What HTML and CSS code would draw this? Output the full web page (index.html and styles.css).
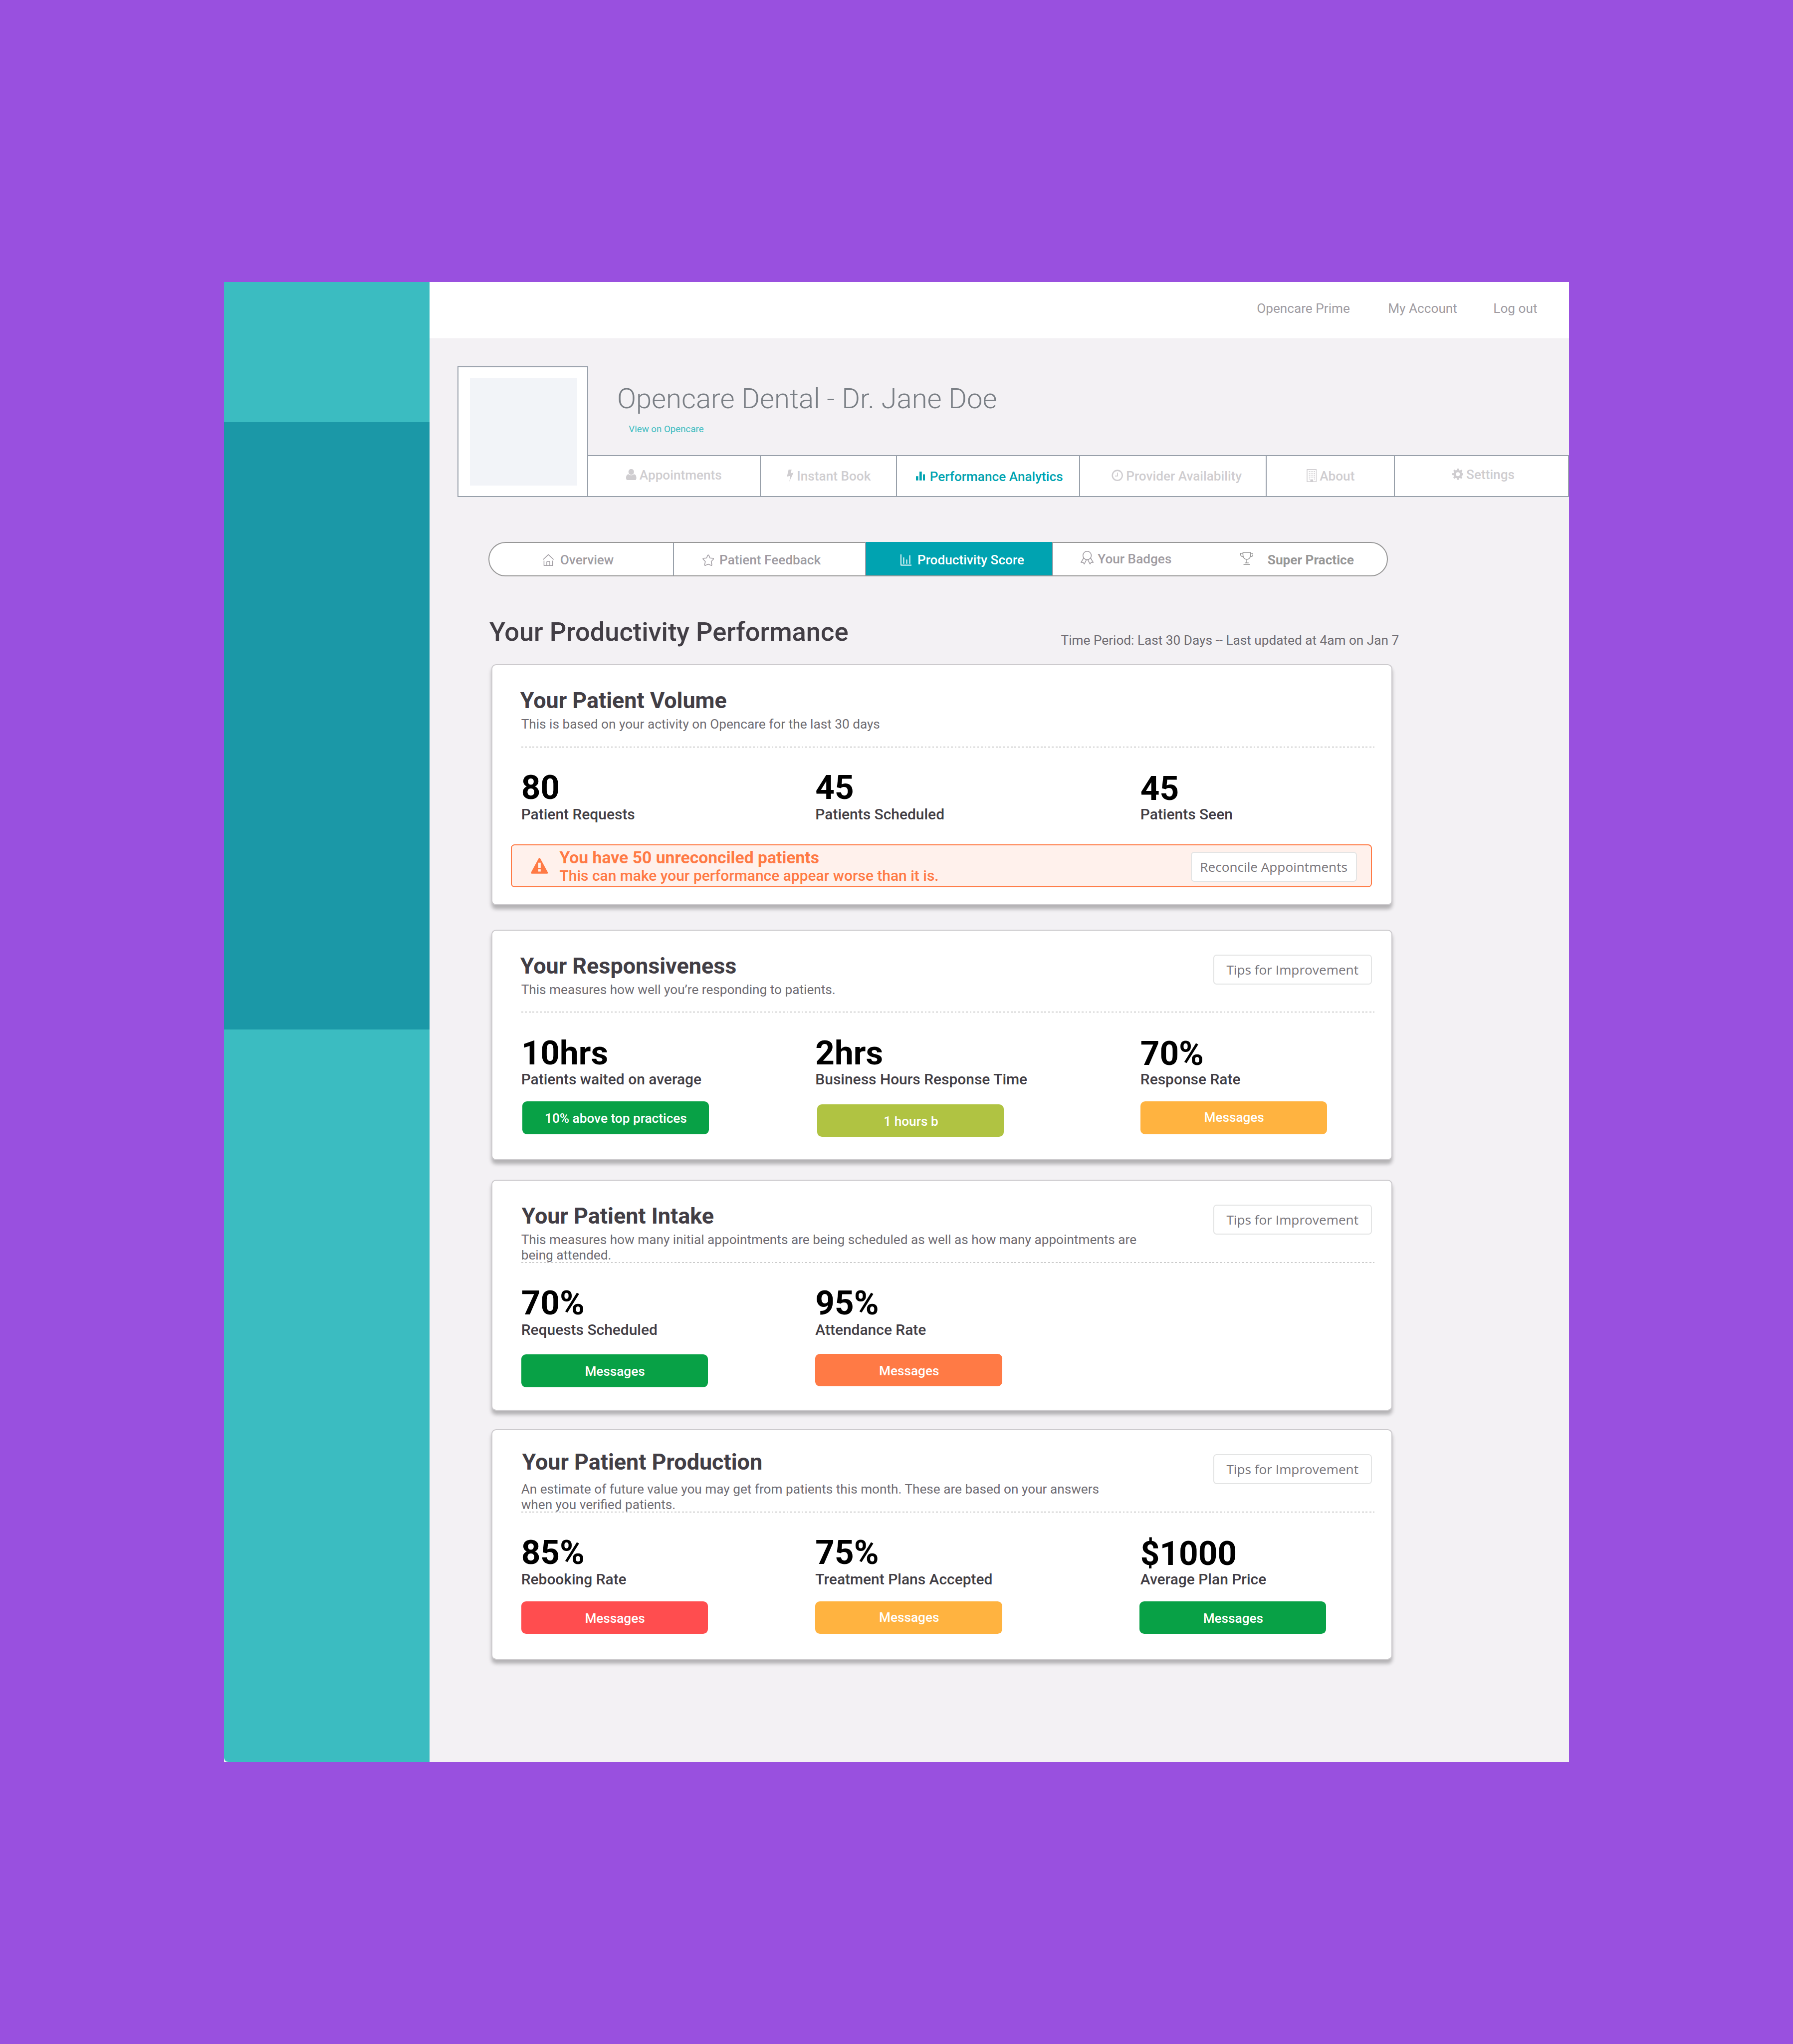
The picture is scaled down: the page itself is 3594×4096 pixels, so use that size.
FILE: index.html
```html
<!DOCTYPE html>
<html lang="en">
<head>
<meta charset="utf-8">
<title>Opencare Dental – Productivity Score</title>
<link rel="stylesheet" href="styles.css">
</head>
<body>
<div class="app">
  <aside class="sidebar"><div class="sidebar-panel"></div></aside>
  <div class="page">
    <header class="topbar">
      <a class="link-prime">Opencare Prime</a>
      <a class="link-account">My Account</a>
      <a class="link-logout">Log out</a>
    </header>

    <section class="profile">
      <div class="avatar"></div>
      <div class="profile-body">
        <h1>Opencare Dental - Dr. Jane Doe</h1>
        <a class="view-link">View on Opencare</a>
        <nav class="tabs">
          <a class="tab tab-appointments"><svg width="22" height="24" viewBox="0 0 22 24"><ellipse cx="11" cy="6" rx="6" ry="6.2"/><path d="M0 19c0-5 2-8 5.500-8 1.500 1.800 3.500 2.300 5.500 2.300s4-.5 5.500-2.300C20 11 22 14 22 19c0 3-1.200 5-3.500 5h-15C1.200 24 0 22 0 19z"/></svg><span>Appointments</span></a>
          <a class="tab tab-instant"><svg width="15" height="26" viewBox="0 0 15 26"><path d="M4 0h6.500L8.300 8l6.200-1.300L5.500 26 7.600 13.500.5 15z"/></svg><span>Instant Book</span></a>
          <a class="tab tab-performance"><svg width="20" height="19" viewBox="0 0 20 19"><path d="M0 10h5v9H0zM7.500 0h5v19h-5zM15 6h5v13h-5z"/></svg><span>Performance Analytics</span></a>
          <a class="tab tab-provider"><svg class="line" width="25" height="25" viewBox="0 0 25 25"><circle cx="12.500" cy="12.500" r="10.700" stroke-width="2.800"/><path d="M12.800 6.500v7.300H7.500" stroke-width="1.900"/></svg><span>Provider Availability</span></a>
          <a class="tab tab-about"><svg class="line" width="22" height="28" viewBox="0 0 22 28"><path d="M1 1h20v26H1z" stroke-width="1.800"/><path d="M8 22h6v5H8z" fill="currentColor" stroke="none"/><path d="M5 5.200h13M5 9.200h13M5 13.200h13M5 17.200h13M5 21.200h2M16 21.200h2" stroke-width="2" stroke-dasharray="2 1.660"/></svg><span>About</span></a>
          <a class="tab tab-settings"><svg width="24" height="24" viewBox="0 0 24 24"><path fill-rule="evenodd" d="M10 0h4l.6 3.400 1.900.8L19.400 2.200l2.500 2.600-2 2.900.8 1.900 3.300.5v3.900l-3.400.6-.8 1.900 2 2.900-2.600 2.600-2.900-2-1.800.8L14 24h-4l-.6-3.500-1.800-.8-2.900 2-2.600-2.600 2-2.900-.8-1.900L0 13.900V10l3.400-.5.8-1.900-2-2.900 2.500-2.600 2.900 2 1.900-.8zM12 7.800a4.200 4.200 0 1 0 0 8.400 4.200 4.200 0 0 0 0-8.400z"/></svg><span>Settings</span></a>
        </nav>
      </div>
    </section>

    <nav class="subnav">
      <a class="seg seg-overview"><svg class="line" width="24" height="26" viewBox="0 0 24 26"><path d="M.8 12 12 1.500 23.200 12M2.600 14.500v10.300h18.600V14.500M8.600 24.500v-7q0-1.500 1.500-1.500h3.400q1.500 0 1.500 1.500v7"/></svg><span>Overview</span></a>
      <a class="seg seg-feedback"><svg class="line" width="25" height="25" viewBox="0 0 25 25"><path d="M12.500 1q.8 0 1.300 1.300l2.400 5.400 6.200.6q2.700.4.700 2.400l-4.300 4.500 1.400 6.500q.3 2.600-1.900 1.700l-5.800-2.600-5.800 2.600q-2.200.9-1.900-1.700l1.400-6.500-4.300-4.500q-2-2 .7-2.400l6.200-.6 2.400-5.400Q11.700 1 12.500 1z"/></svg><span>Patient Feedback</span></a>
      <a class="seg seg-active"><svg class="line" width="24" height="24" viewBox="0 0 24 24"><path d="M1 0v23h23" stroke-width="2"/><path d="M7 6.500V20M13.500 11v9M20 2v18" stroke-width="2"/></svg><span>Productivity Score</span></a>
      <a class="seg seg-badges"><svg class="line" width="28" height="29" viewBox="0 0 28 29"><circle cx="14" cy="9.800" r="9"/><path d="M6.500 15.500.9 24.600l4.300-.4 2.600 4 4.600-9.200M21.500 15.500l5.600 9.100-4.300-.4-2.600 4-4.600-9.200"/></svg><span>Your Badges</span></a>
      <a class="seg seg-super"><svg class="line" width="28" height="28" viewBox="0 0 28 28"><path d="M5.800 1h16.500v5.500c0 5.500-3.400 9.500-8.200 9.500s-8.300-4-8.300-9.500zM5.800 3H.8v2.500c0 3 2.200 4.500 5.400 4.500M22.300 3h5v2.500c0 3-2.200 4.500-5.400 4.500M14 16v7M10 23.500h8M7 26.600h14"/></svg><span>Super Practice</span></a>
    </nav>

    <div class="heading-row">
      <h2>Your Productivity Performance</h2>
      <p class="period">Time Period: Last 30 Days -- Last updated at 4am on Jan 7</p>
    </div>

    <section class="card card-volume">
      <div class="card-head">
        <div class="card-text"><h3>Your Patient Volume</h3><p>This is based on your activity on Opencare for the last 30 days</p></div>
      </div>
      <div class="stats">
        <div class="stat"><strong>80</strong><span class="label">Patient Requests</span></div>
        <div class="stat"><strong>45</strong><span class="label">Patients Scheduled</span></div>
        <div class="stat"><strong>45</strong><span class="label">Patients Seen</span></div>
      </div>
      <div class="alert">
        <svg class="warn" width="37" height="34" viewBox="0 0 37 34"><path fill-rule="evenodd" d="M18.500 0q1 0 1.600 1.200l16 29.300Q37.500 34 34.500 34h-32Q-.5 34 .9 30.500l16-29.300Q17.500 0 18.500 0zM15.800 10.500v11h5.400v-11zM15.800 24.500v5h5.400v-5z"/></svg>
        <div class="alert-text"><strong>You have 50 unreconciled patients</strong><span>This can make your performance appear worse than it is.</span></div>
        <a class="button button-reconcile">Reconcile Appointments</a>
      </div>
    </section>

    <section class="card card-responsiveness">
      <div class="card-head">
        <div class="card-text"><h3>Your Responsiveness</h3><p>This measures how well you’re responding to patients.</p></div>
        <a class="button button-tips">Tips for Improvement</a>
      </div>
      <div class="stats">
        <div class="stat"><strong>10hrs</strong><span class="label">Patients waited on average</span><span class="pill green shift-right">10% above top practices</span></div>
        <div class="stat"><strong>2hrs</strong><span class="label">Business Hours Response Time</span><span class="pill olive lower shift-right-more">1 hours b</span></div>
        <div class="stat"><strong>70%</strong><span class="label">Response Rate</span><span class="pill amber">Messages</span></div>
      </div>
    </section>

    <section class="card card-intake">
      <div class="card-head">
        <div class="card-text"><h3>Your Patient Intake</h3><p>This measures how many initial appointments are being scheduled as well as how many appointments are<br>being attended.</p></div>
        <a class="button button-tips">Tips for Improvement</a>
      </div>
      <div class="stats">
        <div class="stat"><strong>70%</strong><span class="label">Requests Scheduled</span><span class="pill green lower">Messages</span></div>
        <div class="stat"><strong>95%</strong><span class="label">Attendance Rate</span><span class="pill orange low">Messages</span></div>
      </div>
    </section>

    <section class="card card-production">
      <div class="card-head">
        <div class="card-text"><h3>Your Patient Production</h3><p>An estimate of future value you may get from patients this month. These are based on your answers<br>when you verified patients.</p></div>
        <a class="button button-tips">Tips for Improvement</a>
      </div>
      <div class="stats">
        <div class="stat"><strong>85%</strong><span class="label">Rebooking Rate</span><span class="pill red">Messages</span></div>
        <div class="stat"><strong>75%</strong><span class="label">Treatment Plans Accepted</span><span class="pill amber">Messages</span></div>
        <div class="stat"><strong>$1000</strong><span class="label">Average Plan Price</span><span class="pill green shift-left">Messages</span></div>
      </div>
    </section>
  </div>
</div>
</body>
</html>
```
FILE: styles.css
```css
/* 1rem is one hundred design pixels */
html { font-size: 93.6px; }
* { box-sizing: border-box; margin: 0; padding: 0; }
body {
  background: #9950df;
  font-family: Roboto, "Liberation Sans", sans-serif;
  font-size: .28rem;
  padding: 6.04rem 4.8rem 0;
  height: 4096px;
  overflow: hidden;
}
svg { display: block; flex: none; fill: currentColor; zoom: .936; }
svg.line { fill: none; stroke: currentColor; stroke-width: 1.7; stroke-linejoin: round; stroke-linecap: butt; }

.app { display: flex; width: 28.8rem; height: 31.68rem; background: #f3f1f4; }
.sidebar { width: 4.4rem; background: #3bbcc1; padding-top: 3rem; border-bottom-left-radius: .1rem; }
.sidebar-panel { height: 13rem; background: #1b98a7; }
.page { flex: 1; min-width: 0; }

.topbar { display: flex; height: 1.2rem; background: #fff; color: #a09ca2; line-height: 1.15rem; padding-left: 17.715rem; white-space: nowrap; }
.link-prime { width: 2.81rem; }
.link-account { width: 2.255rem; }

.profile { display: flex; margin: .6rem 0 0 .6rem; }
.avatar { width: 2.8rem; height: 2.8rem; padding: .24rem .22rem .22rem .24rem; border: 2px solid #98a0aa; background: linear-gradient(#f2f4f8, #f2f4f8) content-box, #fff; }
.profile-body { flex: 1; display: flex; flex-direction: column; }
h1 { font-size: .6rem; line-height: .7rem; font-weight: 300; color: #7a7f85; padding: .35rem 0 0 .615rem; white-space: nowrap; }
.view-link { font-size: .2rem; line-height: .24rem; color: #3bbcc1; padding: .18rem 0 0 .865rem; }
.tabs { display: flex; height: .9rem; margin-top: auto; background: #fff; border: 2px solid #98a0aa; border-left: 0; color: #cfcdd0; font-weight: 500; }
.tab { display: flex; align-items: center; border-left: 2px solid #98a0aa; white-space: nowrap; gap: .065rem; }
.tab svg { margin-bottom: .02rem; }
.tab-appointments { width: 3.67rem; border-left: 0; padding: 0 0 .04rem .81rem; }
.tab-instant { width: 2.92rem; padding-left: .56rem; }
.tab-performance { width: 3.92rem; padding: .025rem 0 0 .4rem; gap: .1rem; color: #00a3b1; }
.tab-provider { width: 4rem; padding-left: .67rem; }
.tab-about { width: 2.74rem; padding-left: .845rem; }
.tab-settings { flex: 1; padding: 0 0 .05rem 1.225rem; }

.subnav { display: flex; width: 19.26rem; height: .74rem; margin: .96rem 0 0 1.26rem; background: #fff; border: 2px solid #979797; border-radius: .37rem; color: #a09ca2; font-weight: 500; }
.seg { display: flex; align-items: center; white-space: nowrap; border-left: 2px solid #98a0aa; padding-top: .03rem; }
.seg svg { margin-top: .02rem; }
.seg-overview { width: 3.93rem; border-left: 0; padding-left: 1.14rem; gap: .135rem; }
.seg-feedback { width: 4.11rem; padding-left: .61rem; gap: .115rem; }
.seg-active { width: 4.01rem; margin-top: -2px; padding-left: .74rem; padding-top: .05rem; gap: .125rem; background: #00a3b1; color: #fff; }
.seg-badges { width: 3.8rem; padding-left: .59rem; padding-top: 0; gap: .085rem; }
.seg-badges svg { margin: 0 0 .06rem; }
.seg-super { border-left: 0; padding-left: .23rem; gap: .305rem; color: #979797; font-weight: 700; }
.seg-super svg { margin: 0 0 .06rem; }

.heading-row { display: flex; justify-content: space-between; width: 19.48rem; height: 1.88rem; padding-top: .88rem; margin-left: 1.28rem; white-space: nowrap; }
h2 { font-size: .56rem; line-height: .64rem; font-weight: 500; color: #423e45; }
.period { line-height: .32rem; padding-top: .335rem; color: #6f6c72; }

.card { display: flex; flex-direction: column; width: 19.3rem; height: 4.94rem; margin-left: 1.32rem; background: #fff; border: 2px solid #cccacd; border-radius: .1rem; box-shadow: 0 .08rem .08rem rgba(0, 0, 0, .26); white-space: nowrap; padding: 0 .36rem 0 .62rem; }
.card-volume { height: 5.16rem; }
.card-responsiveness { margin-top: .52rem; }
.card-intake { margin-top: .42rem; }
.card-production { margin-top: .4rem; }
.card-head { display: flex; justify-content: space-between; height: 1.76rem; padding-top: .48rem;
  background: repeating-linear-gradient(90deg, #cbcbcb 0 .04rem, transparent .04rem .08rem) left bottom / 100% 2px no-repeat; }
h3 { font-size: .48rem; line-height: .56rem; font-weight: 700; color: #423e45; margin-left: -.02rem; }
.card-text p { line-height: .328rem; padding-top: .06rem; color: #6f6c72; }
.card-intake h3 { margin-left: .01rem; }
.card-production h3 { margin: -.08rem 0 .08rem .02rem; }

.button { font-family: "Open Sans", "Noto Sans", sans-serif; color: #77747a; background: #fff; border: 2px solid #e3e4e4; border-radius: .07rem; text-align: center; height: .64rem; line-height: .605rem; }
.button-tips { width: 3.4rem; margin: .035rem .06rem 0 0; }
.button-reconcile { width: 3.56rem; margin: .02rem 0 0 auto; }

.stats { display: grid; grid-template-columns: 6.3rem 6.96rem 1fr; padding-top: .494rem; }
.stat { display: flex; flex-direction: column; }
.stat strong { font-size: .72rem; line-height: .72rem; color: #000; }
.stat:nth-child(3) strong { padding-top: .02rem; margin-bottom: -.02rem; }
.label { font-size: .32rem; line-height: .36rem; font-weight: 500; color: #423e45; margin-top: .037rem; }
.pill { width: 4rem; height: .7rem; line-height: .7rem; margin: .289rem 0 0 0; padding: .022rem 0 0 .015rem; border-radius: .1rem; color: #fff; font-weight: 500; text-align: center; }
.low { margin-top: .329rem; }
.lower { margin-top: .349rem; }
.shift-right { margin-left: .02rem; }
.shift-right-more { margin-left: .04rem; }
.shift-left { margin-left: -.02rem; }
.green { background: #08a146; }
.olive { background: #b0c342; }
.amber { background: #ffb340; padding-top: 0; }
.orange { background: #ff7a45; }
.red { background: #ff4d4f; }

.alert { display: flex; align-items: center; height: .92rem; margin: .469rem .06rem 0 -.22rem; padding: .02rem .3rem 0 .41rem; border: 2px solid #ff7a45; border-radius: .08rem; background: #fff1ec; color: #ff7a45; }
.warn { margin-bottom: .03rem; }
.alert-text { display: flex; flex-direction: column; margin-left: .24rem; }
.alert-text strong { font-size: .36rem; line-height: .4rem; }
.alert-text span { font-size: .32rem; line-height: .38rem; font-weight: 500; }
```
